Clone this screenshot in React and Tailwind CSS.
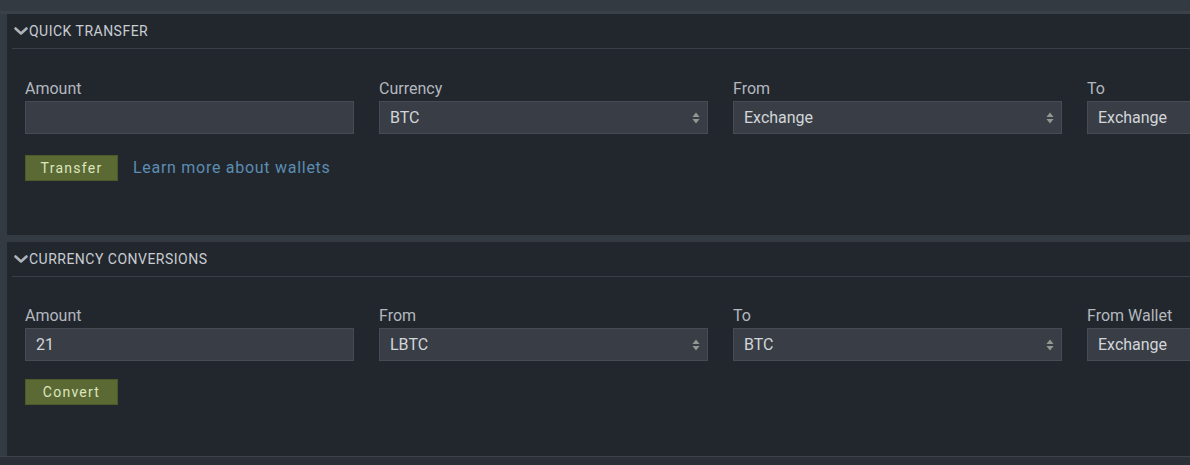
import React from "react";

const FONT = { fontFamily: "Roboto, 'Liberation Sans', sans-serif" };

function Chevron() {
  return (
    <svg width="14" height="10" viewBox="0 0 14 10" className="shrink-0">
      <path d="M1.5 2.5 L7 7.5 L12.5 2.5" fill="none" stroke="#aeb3b9" strokeWidth="2.6" strokeLinecap="round" strokeLinejoin="round" />
    </svg>
  );
}

function SelectArrows() {
  return (
    <svg width="8" height="12" viewBox="0 0 8 12" className="shrink-0">
      <path d="M4 0.5 L7.5 5 L0.5 5 Z" fill="#939990" />
      <path d="M4 11.5 L7.5 7 L0.5 7 Z" fill="#939990" />
    </svg>
  );
}

function Field({ label, value, select }) {
  return (
    <div className="flex flex-col">
      <label className="text-[16px] leading-[20px] text-[#b3b8be] mb-[2px]">{label}</label>
      <div className="h-[33px] bg-[#393e46] border border-[#474c54] flex items-center pl-[10px] pr-[7px] justify-between">
        <span className="text-[16px] text-[#d2d5d9]">{value}</span>
        {select && <SelectArrows />}
      </div>
    </div>
  );
}

function Panel({ title, fields, children, bodyTop, rowTop, bottom }) {
  return (
    <section className="bg-[#22272e] w-[1440px]">
      <header className="h-[35px] flex items-center pl-[2px] gap-[1px] border-b border-[#3a3f47] ml-[5px]">
        <Chevron />
        <h2 className="text-[14px] text-[#c9cdd2] uppercase tracking-[0.035em]">{title}</h2>
      </header>
      <div className={`px-[18px] ${bodyTop} ${bottom}`}>
        <div className="grid grid-cols-[329px_329px_329px_329px] gap-x-[25px]">
          {fields.map((f) => (
            <Field key={f.label} {...f} />
          ))}
        </div>
        <div className={`flex items-center gap-[15px] ${rowTop}`}>{children}</div>
      </div>
    </section>
  );
}

function GreenButton({ children }) {
  return (
    <button className="h-[26px] w-[93px] bg-[#5b6a35] border border-[#4c5a2b] text-[14px] text-[#dce6bd] tracking-[0.09em]">
      {children}
    </button>
  );
}

export default function App() {
  return (
    <div className="w-[1190px] h-[465px] overflow-hidden bg-[#343a42]" style={FONT}>
      <div className="h-[14px] border-b-[3px] border-[#3b4149]" />
      <div className="pl-[7px] flex flex-col gap-[7px]">
        <Panel
          title="Quick Transfer"
          bodyTop="pt-[30px]"
          rowTop="mt-[21px]"
          bottom="pb-[54px]"
          fields={[
            { label: "Amount", value: "" },
            { label: "Currency", value: "BTC", select: true },
            { label: "From", value: "Exchange", select: true },
            { label: "To", value: "Exchange", select: true },
          ]}
        >
          <GreenButton>Transfer</GreenButton>
          <a className="text-[16px] text-[#5c8db2] tracking-[0.045em]">Learn more about wallets</a>
        </Panel>
        <Panel
          title="Currency Conversions"
          bodyTop="pt-[29px]"
          rowTop="mt-[18px]"
          bottom="pb-[51px]"
          fields={[
            { label: "Amount", value: "21" },
            { label: "From", value: "LBTC", select: true },
            { label: "To", value: "BTC", select: true },
            { label: "From Wallet", value: "Exchange", select: true },
          ]}
        >
          <GreenButton>Convert</GreenButton>
        </Panel>
      </div>
      <div className="h-[10px] bg-[#2b3037] border-t border-[#3d434b]" />
    </div>
  );
}
